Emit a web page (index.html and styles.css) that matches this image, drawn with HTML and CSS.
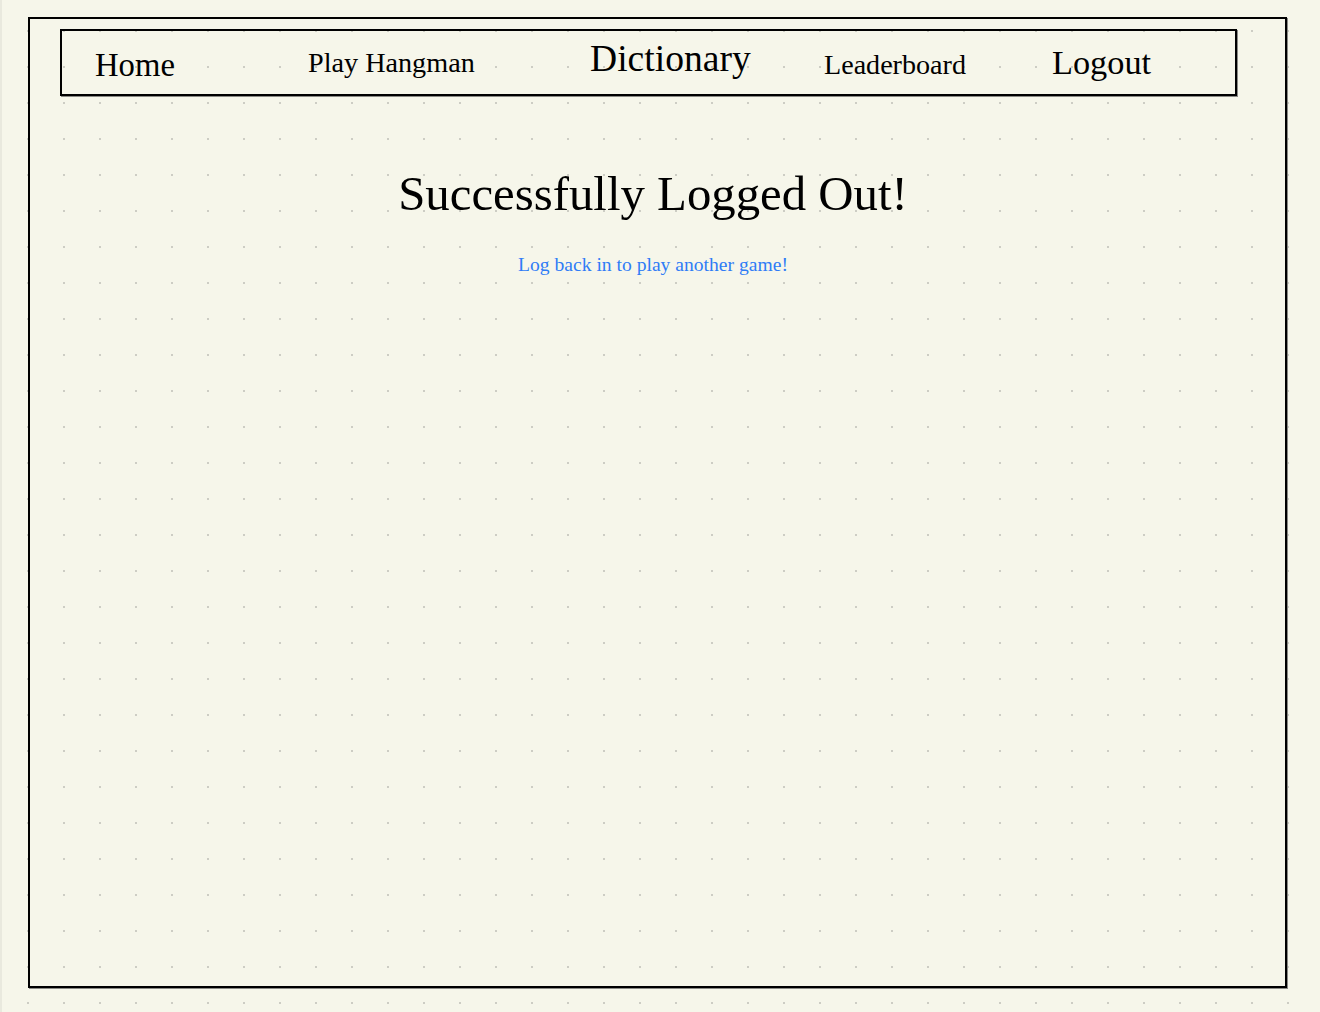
FILE: index.html
```html
<!DOCTYPE html>
<html lang="en">
<head>
<meta charset="utf-8">
<title>Logged Out</title>
<link rel="stylesheet" href="styles.css">
</head>
<body>
  <div class="frame">
    <nav class="nav">
      <a class="nav-item home" href="#">Home</a>
      <a class="nav-item play" href="#">Play Hangman</a>
      <a class="nav-item dict" href="#">Dictionary</a>
      <a class="nav-item leader" href="#">Leaderboard</a>
      <a class="nav-item logout" href="#">Logout</a>
    </nav>
    <main class="content">
      <h1 class="title">Successfully Logged Out!</h1>
      <a class="back-link" href="#">Log back in to play another game!</a>
    </main>
  </div>
</body>
</html>
```

FILE: styles.css
```css
html {
  background-color: #f6f6ea;
  background-image: radial-gradient(circle at 1px 1px, #cdcdc4 1.3px, transparent 1.5px);
  background-size: 36px 36px;
  background-position: 27px 30px;
}

body {
  margin: 0;
  min-height: 100vh;
  box-sizing: border-box;
  padding: 17px 0 0 28px;
  box-shadow: inset 2px 0 0 #e9e9de;
  font-family: "Liberation Serif", "Times New Roman", serif;
  color: #000;
}

.frame {
  box-sizing: border-box;
  width: 1259px;
  height: 971px;
  border: 2px solid #000;
  box-shadow: 1px 1px 0 #8a8a85;
  padding: 10px 0 0 30px;
}

.nav {
  box-sizing: border-box;
  width: 1177px;
  height: 67px;
  border: 2px solid #000;
  box-shadow: 1px 1px 0 #8a8a85;
  display: grid;
  grid-template-columns: 213px 282px 234px 228px 1fr;
  align-items: start;
  padding-left: 33px;
}

.nav-item {
  color: #000;
  text-decoration: none;
  line-height: 1;
  white-space: nowrap;
}

.home { font-size: 32.7px; margin-top: 17.6px; }
.play { font-size: 28.2px; margin-top: 18.4px; }
.dict { font-size: 37.6px; margin-top: 9.3px; }
.leader { font-size: 28.1px; margin-top: 19.5px; }
.logout { font-size: 34.3px; margin-top: 13.5px; }

.content {
  display: flex;
  flex-direction: column;
  align-items: center;
  padding: 74px 39px 0 0;
}

.title {
  margin: 0;
  font-weight: normal;
  font-size: 48.8px;
  line-height: 1;
}

.back-link {
  margin-top: 36.7px;
  font-size: 19.6px;
  line-height: 1;
  color: #2f7cf6;
  text-decoration: none;
}
```
